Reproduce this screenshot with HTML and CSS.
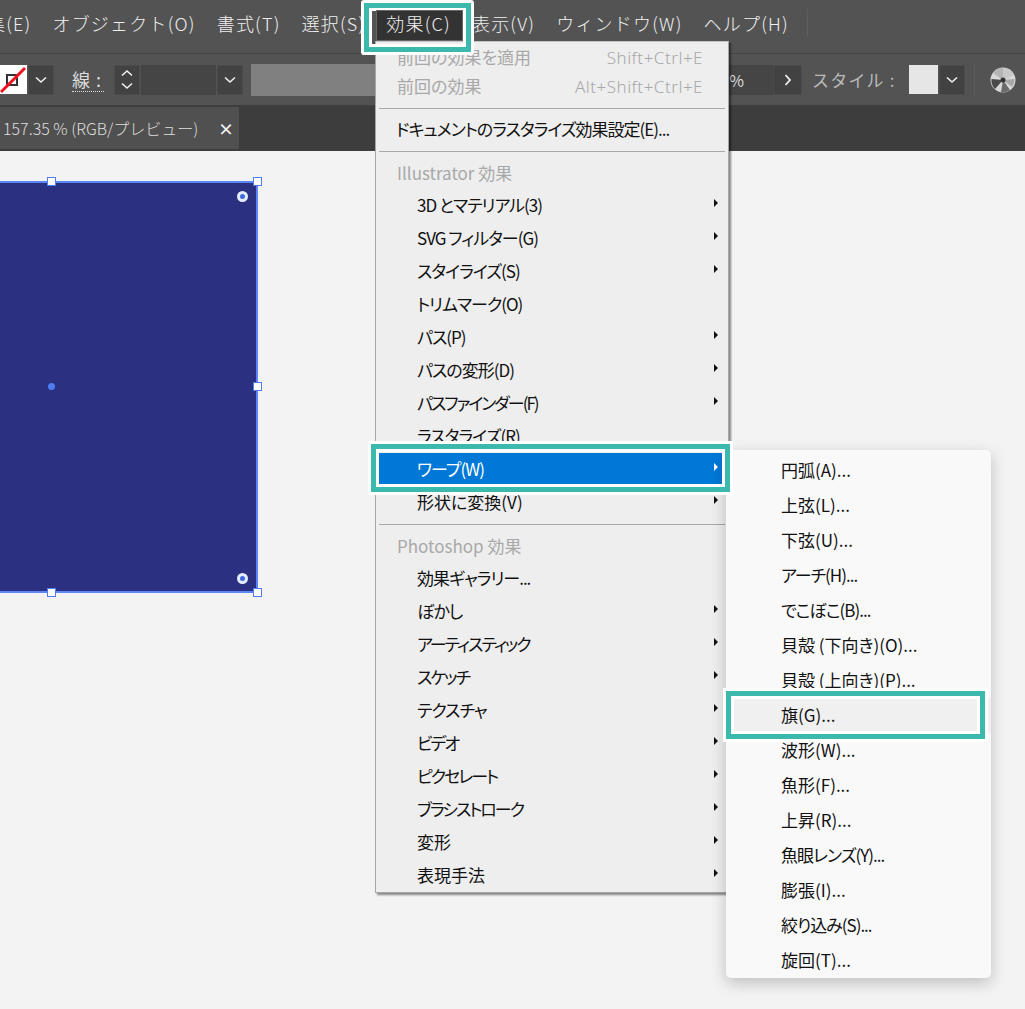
FILE: index.html
```html
<!DOCTYPE html>
<html lang="ja">
<head>
    <meta charset="UTF-8">
    <meta name="viewport" content="width=device-width, initial-scale=1.0">
    <title>効果メニュー</title>
    <link rel="stylesheet" href="styles.css">
</head>
<body>
    <div class="app">
        <!-- Menu bar -->
        <div class="menubar">
            <span class="menubar-item">集(E)</span>
            <span class="menubar-item">オブジェクト(O)</span>
            <span class="menubar-item">書式(T)</span>
            <span class="menubar-item">選択(S)</span>
            <span class="menubar-item is-open">効果(C)</span>
            <span class="menubar-item">表示(V)</span>
            <span class="menubar-item">ウィンドウ(W)</span>
            <span class="menubar-item">ヘルプ(H)</span>
            <span class="menubar-sep"></span>
        </div>

        <!-- Control bar -->
        <div class="toolbar">
            <div class="swatch-none">
                <svg viewBox="0 0 27 29"><rect x="7" y="10" width="10" height="10" fill="none" stroke="#333" stroke-width="2"/><path d="M1 27L25 3" stroke="#f2101c" stroke-width="3"/></svg>
            </div>
            <button class="tool-btn"><svg class="chev" viewBox="0 0 12 8"><path d="M1 1.5l5 4.5 5-4.5"/></svg></button>
            <span class="stroke-label">線 :</span>
            <button class="tool-btn stepper">
                <svg class="chev" viewBox="0 0 12 8"><path d="M1 6.5l5-4.5 5 4.5"/></svg>
                <svg class="chev" viewBox="0 0 12 8"><path d="M1 1.5l5 4.5 5-4.5"/></svg>
            </button>
            <span class="tool-field"></span>
            <button class="tool-btn"><svg class="chev" viewBox="0 0 12 8"><path d="M1 1.5l5 4.5 5-4.5"/></svg></button>
            <span class="tool-slider"></span>
            <span class="opacity-field">%</span>
            <button class="tool-btn next-btn"><svg class="chev-right" viewBox="0 0 8 12"><path d="M1.5 1l4.5 5-4.5 5"/></svg></button>
            <span class="style-label">スタイル :</span>
            <span class="style-swatch"></span>
            <button class="tool-btn"><svg class="chev" viewBox="0 0 12 8"><path d="M1 1.5l5 4.5 5-4.5"/></svg></button>
            <span class="toolbar-sep"></span>
            <svg class="globe" viewBox="0 0 26 26">
                <circle cx="13" cy="13" r="12.5" fill="#d8d8d8"/>
                <path d="M13 13L3 6A12 12 0 0 1 13 1z" fill="#b4b4b4"/>
                <path d="M13 13L13 1A12 12 0 0 1 24 8z" fill="#c8c8c8"/>
                <path d="M13 13L5 22A12 12 0 0 1 1.500 12z" fill="#4a4a4a"/>
                <path d="M13 13L20 23A12 12 0 0 1 11 25z" fill="#6a6a6a"/>
                <path d="M13 13L24.500 12A12 12 0 0 1 22 20z" fill="#a8a8a8"/>
                <circle cx="13" cy="13" r="2.500" fill="#333"/>
            </svg>
        </div>

        <!-- Document tabs -->
        <div class="tabbar">
            <div class="tab">
                <span class="tab-title">157.35 % (RGB/プレビュー)</span>
                <span class="tab-close">×</span>
            </div>
        </div>

        <!-- Canvas -->
        <div class="canvas">
            <div class="artboard">
                <span class="live-corner corner-top"></span>
                <span class="live-corner corner-bottom"></span>
            </div>
            <span class="handle h-top-mid"></span>
            <span class="handle h-top-right"></span>
            <span class="handle h-mid-right"></span>
            <span class="handle h-bottom-mid"></span>
            <span class="handle h-bottom-right"></span>
            <span class="center-dot"></span>
        </div>

        <!-- Effect menu -->
        <div class="menu">
            <div class="row row-top disabled"><span>前回の効果を適用</span><span class="shortcut">Shift+Ctrl+E</span></div>
            <div class="row row-top disabled"><span>前回の効果</span><span class="shortcut">Alt+Shift+Ctrl+E</span></div>
            <div class="sep"></div>
            <div class="row row-doc kana">ドキュメントのラスタライズ効果設定(E)...</div>
            <div class="sep"></div>
            <div class="row-head">Illustrator 効果</div>
            <div class="row has-sub kana">3D とマテリアル(3)</div>
            <div class="row has-sub kana">SVG フィルター(G)</div>
            <div class="row has-sub kana">スタイライズ(S)</div>
            <div class="row kana">トリムマーク(O)</div>
            <div class="row has-sub kana">パス(P)</div>
            <div class="row has-sub kana">パスの変形(D)</div>
            <div class="row has-sub kana-tight">パスファインダー(F)</div>
            <div class="row kana">ラスタライズ(R)</div>
            <div class="row has-sub selected kana">ワープ(W)</div>
            <div class="row has-sub">形状に変換(V)</div>
            <div class="sep sep-last"></div>
            <div class="row-head">Photoshop 効果</div>
            <div class="row kana">効果ギャラリー...</div>
            <div class="row has-sub kana">ぼかし</div>
            <div class="row has-sub kana-tight">アーティスティック</div>
            <div class="row has-sub kana-tight">スケッチ</div>
            <div class="row has-sub kana">テクスチャ</div>
            <div class="row has-sub kana-tight">ビデオ</div>
            <div class="row has-sub kana-tight">ピクセレート</div>
            <div class="row has-sub kana-tight">ブラシストローク</div>
            <div class="row has-sub">変形</div>
            <div class="row has-sub">表現手法</div>
        </div>

        <!-- Warp submenu -->
        <div class="submenu">
            <div class="sub-row">円弧(A)...</div>
            <div class="sub-row">上弦(L)...</div>
            <div class="sub-row">下弦(U)...</div>
            <div class="sub-row kana">アーチ(H)...</div>
            <div class="sub-row kana">でこぼこ(B)...</div>
            <div class="sub-row">貝殻 (下向き)(O)...</div>
            <div class="sub-row">貝殻 (上向き)(P)...</div>
            <div class="sub-row hover">旗(G)...</div>
            <div class="sub-row">波形(W)...</div>
            <div class="sub-row">魚形(F)...</div>
            <div class="sub-row">上昇(R)...</div>
            <div class="sub-row kana">魚眼レンズ(Y)...</div>
            <div class="sub-row">膨張(I)...</div>
            <div class="sub-row kana">絞り込み(S)...</div>
            <div class="sub-row">旋回(T)...</div>
        </div>

        <!-- Tutorial highlights -->
        <div class="callout callout-menu"></div>
        <div class="callout callout-warp"></div>
        <div class="callout callout-flag"></div>
    </div>
</body>
</html>
```

FILE: styles.css
```css
/* General */
body {
    margin: 0;
    font-family: "Noto Sans CJK JP", "Noto Sans", sans-serif;
    background-color: #f3f3f3;
}

.app {
    position: relative;
    display: flex;
    flex-direction: column;
    width: 1025px;
    height: 1009px;
    overflow: hidden;
}

/* Menu bar */
.menubar {
    display: flex;
    align-items: center;
    gap: 21px;
    height: 54px;
    flex: none;
    box-sizing: border-box;
    padding-bottom: 7px;
    margin-left: -13px;
    background-color: #535353;
    border-bottom: 1px solid #464646;
    color: #efefef;
    font-size: 18px;
    font-weight: 300;
    letter-spacing: 1.2px;
    white-space: nowrap;
}

.menubar-item {
    line-height: 24px;
}

.menubar-item.is-open {
    position: relative;
    z-index: 3;
}

.menubar-item.is-open::before {
    content: "";
    position: absolute;
    left: -10px;
    right: -12px;
    top: -1px;
    bottom: -6px;
    z-index: -1;
    background-color: #333;
    border: 1px solid #666;
}

.menubar-sep {
    width: 1px;
    height: 28px;
    margin-left: -3px;
    background-color: #5e5e5e;
}

/* Control bar */
.toolbar {
    display: flex;
    align-items: center;
    height: 53px;
    flex: none;
    box-sizing: border-box;
    background-color: #535353;
    border-bottom: 2px solid #3e3e3e;
    color: #dcdcdc;
}

.swatch-none {
    width: 27px;
    height: 29px;
    flex: none;
    background-color: #fff;
}

.swatch-none svg {
    display: block;
}

.tool-btn {
    display: flex;
    align-items: center;
    justify-content: center;
    width: 26px;
    height: 30px;
    flex: none;
    padding: 0;
    margin-left: 1px;
    border: 1px solid #4b4b4b;
    border-radius: 2px;
    background-color: #424242;
}

.chev {
    width: 12px;
    height: 8px;
    fill: none;
    stroke: #f0f0f0;
    stroke-width: 1.6;
}

.chev-right {
    width: 8px;
    height: 12px;
    fill: none;
    stroke: #f0f0f0;
    stroke-width: 1.8;
}

.stroke-label {
    width: 32px;
    margin-left: 18px;
    flex: none;
    border-bottom: 1px dotted #dcdcdc;
    font-size: 18px;
    word-spacing: 2px;
    line-height: 24px;
    white-space: nowrap;
}

.stepper {
    flex-direction: column;
    gap: 5px;
    margin-left: 10px;
}

.tool-field {
    width: 75px;
    height: 30px;
    flex: none;
    margin-left: 1px;
    background-color: #454545;
}

.tool-slider {
    width: 124px;
    height: 32px;
    flex: none;
    margin-left: 8px;
    background-color: #808080;
}

.opacity-field {
    box-sizing: border-box;
    width: 175px;
    height: 30px;
    flex: none;
    padding-right: 29px;
    margin-left: 223px;
    background-color: #454545;
    font-size: 16px;
    line-height: 31px;
    text-align: right;
}

.next-btn {
    width: 29px;
    margin-left: 0;
}

.style-label {
    width: 88px;
    margin-left: 10px;
    flex: none;
    color: #b9b9b9;
    font-size: 17px;
    letter-spacing: 1.2px;
    white-space: nowrap;
}

.style-swatch {
    width: 29px;
    height: 29px;
    flex: none;
    margin-left: 9px;
    background-color: #e6e6e6;
}

.toolbar-sep {
    width: 1px;
    height: 34px;
    flex: none;
    margin-left: 9px;
    background-color: #5c5c5c;
}

.globe {
    width: 26px;
    height: 26px;
    flex: none;
    margin-left: 15px;
}

/* Document tabs */
.tabbar {
    height: 44px;
    flex: none;
    background-color: #3d3d3d;
}

.tab {
    display: flex;
    align-items: center;
    width: 239px;
    height: 42px;
    box-sizing: border-box;
    padding-left: 3px;
    background-color: #505050;
    color: #dedede;
}

.tab-title {
    width: 215px;
    flex: none;
    font-size: 16px;
    font-weight: 300;
    white-space: nowrap;
}

.tab-close {
    font-size: 16px;
    font-weight: 700;
    color: #f4f4f4;
}

/* Canvas */
.canvas {
    position: relative;
    flex: 1;
    background-color: #f3f3f3;
}

.artboard {
    position: absolute;
    left: -10px;
    top: 30px;
    width: 268px;
    height: 412px;
    box-sizing: border-box;
    background-color: #2b3180;
    border: 2px solid #5b86f5;
    border-left: none;
}

.live-corner {
    position: absolute;
    right: 8px;
    width: 11px;
    height: 11px;
    box-sizing: border-box;
    border: 3px solid #e6edff;
    border-radius: 50%;
    background-color: #3f68e0;
}

.corner-top {
    top: 8px;
}

.corner-bottom {
    bottom: 7px;
}

.handle {
    position: absolute;
    width: 9px;
    height: 9px;
    box-sizing: border-box;
    background-color: #fff;
    border: 1px solid #4f7cf0;
}

.h-top-mid {
    left: 47px;
    top: 26px;
}

.h-top-right {
    left: 253px;
    top: 26px;
}

.h-mid-right {
    left: 253px;
    top: 231px;
}

.h-bottom-mid {
    left: 47px;
    top: 437px;
}

.h-bottom-right {
    left: 253px;
    top: 437px;
}

.center-dot {
    position: absolute;
    left: 48px;
    top: 232px;
    width: 7px;
    height: 7px;
    border-radius: 50%;
    background-color: #4f7cf0;
}

/* Effect menu */
.menu {
    position: absolute;
    left: 375px;
    top: 41px;
    width: 354px;
    padding-top: 2px;
    height: 852px;
    box-sizing: border-box;
    background-color: #eee;
    border: 1px solid #a6a6a6;
    border-top-color: #c4c4c4;
    box-shadow: 2px 2px 2px rgba(0, 0, 0, 0.45);
    color: #111;
    font-size: 17px;
    font-feature-settings: "palt";
}

.row {
    position: relative;
    display: flex;
    justify-content: space-between;
    align-items: center;
    box-sizing: border-box;
    height: 33px;
    margin-left: 3px;
    margin-right: 4px;
    padding-left: 38px;
    padding-right: 26px;
    padding-bottom: 2px;
    white-space: nowrap;
}

.row-top {
    height: 29px;
    padding-left: 18px;
    padding-right: 21px;
    padding-bottom: 4px;
}

.row-doc {
    height: 31px;
    padding-left: 17px;
}

/* Kana in the original menu font are narrower than in Noto */
.kana {
    letter-spacing: -1px;
}

.kana-tight {
    letter-spacing: -2px;
}

.disabled {
    color: #a8a8a8;
}

.row-head {
    display: flex;
    align-items: center;
    box-sizing: border-box;
    height: 32px;
    padding-left: 21px;
    padding-bottom: 2px;
    color: #a8a8a8;
}

.sep {
    height: 1px;
    margin: 6px 3px 5px;
    background-color: #a8a8a8;
}

.sep-last {
    margin-top: 5px;
    margin-bottom: 5px;
}

.has-sub::after {
    content: "";
    position: absolute;
    right: 6px;
    top: 10px;
    border-left: 4px solid #111;
    border-top: 4px solid transparent;
    border-bottom: 4px solid transparent;
}

.selected {
    background-color: #0078d7;
    color: #fff;
}

.selected::after {
    border-left-color: #fff;
}

.shortcut {
    padding-top: 2px;
    font-family: "Noto Sans", sans-serif;
    font-weight: 300;
    letter-spacing: 0.5px;
}

/* Warp submenu */
.submenu {
    position: absolute;
    left: 726px;
    top: 450px;
    width: 265px;
    height: 528px;
    box-sizing: border-box;
    padding-top: 3px;
    background-color: #f9f9f9;
    border-radius: 5px;
    box-shadow: 0 5px 16px rgba(0, 0, 0, 0.22);
    color: #111;
    font-size: 17px;
    font-feature-settings: "palt";
}

.sub-row {
    display: flex;
    align-items: center;
    box-sizing: border-box;
    height: 35px;
    padding-left: 55px;
    padding-bottom: 2px;
    white-space: nowrap;
}

.hover {
    background-color: #f0f0f0;
}

/* Tutorial highlights */
.callout {
    position: absolute;
    box-sizing: border-box;
    border: 5px solid #3ab9ac;
    box-shadow: 0 0 0 3px #fff, inset 0 0 0 3px #fff;
}

.callout-menu {
    left: 364px;
    top: 3px;
    width: 107px;
    height: 49px;
    border-radius: 1px;
}

.callout-warp {
    left: 371px;
    top: 444px;
    width: 359px;
    height: 48px;
}

.callout-flag {
    left: 726px;
    top: 691px;
    width: 259px;
    height: 48px;
}
```
